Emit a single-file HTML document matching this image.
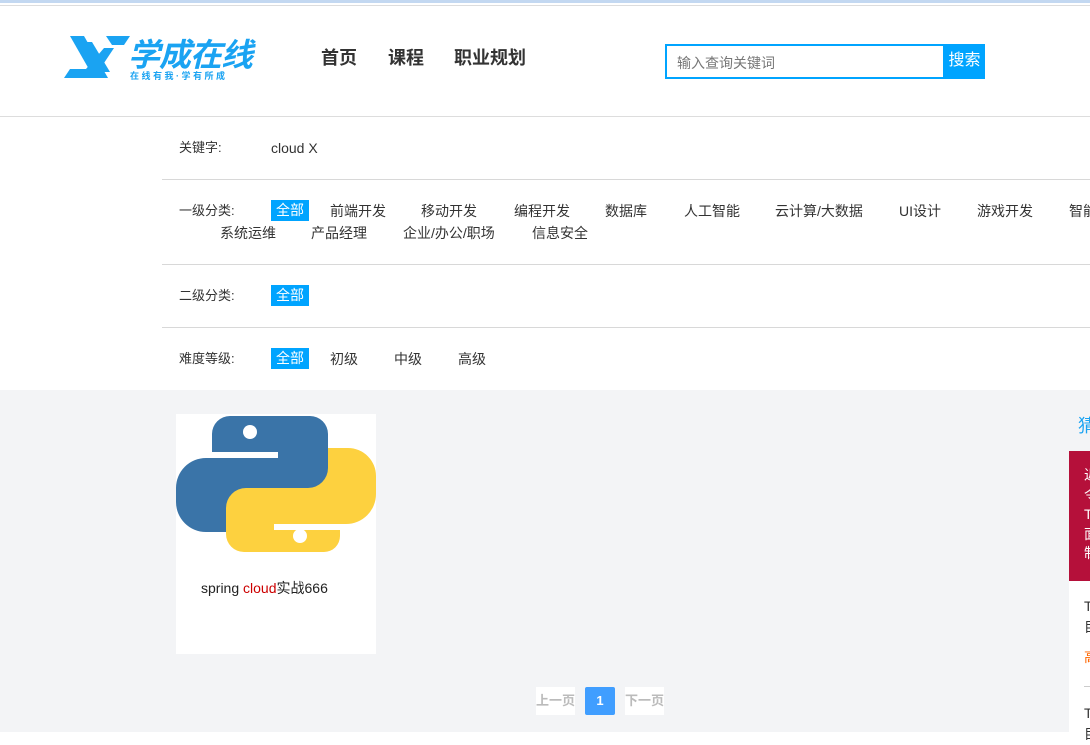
<!DOCTYPE html>
<html><head><meta charset="utf-8"><style>
*{margin:0;padding:0;box-sizing:border-box}
body{width:1090px;height:732px;overflow:hidden;background:#fff;font-family:"Liberation Sans","Noto Sans CJK SC",sans-serif;position:relative;color:#333}
.a{position:absolute;white-space:nowrap}
.f{font-size:14px;color:#333;line-height:16px}
.sel{background:#00a4ff;color:#fff;padding:0 5px;line-height:21px;height:21px}
.line{position:absolute;left:162px;right:0;height:1px;background:#d8d8d8}
</style></head><body>
<div class="a" style="left:0;top:0;width:1090px;height:3px;background:#c3d8f1"></div>
<div class="a" style="left:0;top:5px;width:1090px;height:1px;background:#ddd"></div>
<svg class="a" style="left:64px;top:36px" width="66" height="42" viewBox="0 0 66 42">
<polygon points="6,0 20,0 44,42 30,42" fill="#1aa3f2"/>
<polygon points="22,6 28,6 46,36 40,36" fill="#1aa3f2"/>
<polygon points="42,0 66,0 60,9 48,9" fill="#1aa3f2"/>
<polygon points="40,12 50,12 30,42 0,42 6,33 22,33" fill="#1aa3f2"/>
</svg>
<div class="a" style="left:128px;top:30px;font-size:32px;font-weight:bold;font-style:italic;color:#1aa3f2;letter-spacing:-1px">学成在线</div>
<div class="a" style="left:130px;top:69px;font-size:9px;color:#1aa3f2;letter-spacing:2.5px;font-weight:bold">在线有我·学有所成</div>
<div class="a" style="left:321px;top:44px;font-size:18px;font-weight:bold;color:#333">首页</div>
<div class="a" style="left:388px;top:44px;font-size:18px;font-weight:bold;color:#333">课程</div>
<div class="a" style="left:454px;top:44px;font-size:18px;font-weight:bold;color:#333">职业规划</div>
<div class="a" style="left:665px;top:44px;width:280px;height:35px;border:2px solid #00a4ff;font-size:14px;color:#777;padding:7px 10px">输入查询关键词</div>
<div class="a" style="left:944px;top:44px;width:41px;height:35px;background:#00a4ff;color:#fff;font-size:16px;line-height:34px;text-align:center">搜索</div>
<div class="a" style="left:0;top:116px;width:1090px;height:1px;background:#ddd"></div>

<div class="a f" style="left:179px;top:140px;font-size:13px">关键字:</div>
<div class="a f" style="left:271px;top:140px">cloud X</div>
<div class="line" style="top:179px"></div>
<div class="a f" style="left:179px;top:203px;font-size:13px">一级分类:</div>
<div class="a f sel" style="left:271px;top:200px">全部</div>
<div class="a f" style="left:330px;top:203px">前端开发</div>
<div class="a f" style="left:421px;top:203px">移动开发</div>
<div class="a f" style="left:514px;top:203px">编程开发</div>
<div class="a f" style="left:605px;top:203px">数据库</div>
<div class="a f" style="left:684px;top:203px">人工智能</div>
<div class="a f" style="left:775px;top:203px">云计算/大数据</div>
<div class="a f" style="left:899px;top:203px">UI设计</div>
<div class="a f" style="left:977px;top:203px">游戏开发</div>
<div class="a f" style="left:1069px;top:203px">智能</div>
<div class="a f" style="left:220px;top:225px">系统运维</div>
<div class="a f" style="left:311px;top:225px">产品经理</div>
<div class="a f" style="left:403px;top:225px">企业/办公/职场</div>
<div class="a f" style="left:532px;top:225px">信息安全</div>
<div class="line" style="top:264px"></div>
<div class="a f" style="left:179px;top:288px;font-size:13px">二级分类:</div>
<div class="a f sel" style="left:271px;top:285px">全部</div>
<div class="line" style="top:327px"></div>
<div class="a f" style="left:179px;top:351px;font-size:13px">难度等级:</div>
<div class="a f sel" style="left:271px;top:348px">全部</div>
<div class="a f" style="left:330px;top:351px">初级</div>
<div class="a f" style="left:394px;top:351px">中级</div>
<div class="a f" style="left:458px;top:351px">高级</div>

<div class="a" style="left:0;top:390px;width:1090px;height:342px;background:#f3f4f6"></div>
<div class="a" style="left:176px;top:414px;width:200px;height:240px;background:#fff"></div>
<svg class="a" style="left:176px;top:414px" width="200" height="138" viewBox="0 0 200 138">
<path d="M54,2 h80 a18,18 0 0 1 18,18 v40 a18,18 0 0 1 -18,18 h-60 a20,20 0 0 0 -20,20 v20 h-24 a30,30 0 0 1 -30,-30 v-14 a30,30 0 0 1 30,-30 h72 v-6 h-66 v-18 a18,18 0 0 1 18,-18z" fill="#3a74a8"/>
<circle cx="74" cy="18" r="7" fill="#fff"/>
<path d="M152,34 h20 a28,28 0 0 1 28,28 v18 a30,30 0 0 1 -30,30 h-72 v6 h66 v6 a16,16 0 0 1 -16,16 h-80 a18,18 0 0 1 -18,-18 v-26 a20,20 0 0 1 20,-20 h62 a20,20 0 0 0 20,-20z" fill="#fdd13f"/>
<circle cx="124" cy="122" r="7" fill="#fff"/>
</svg>
<div class="a" style="left:201px;top:578px;font-size:14px;color:#222">spring <span style="color:#c00">cloud</span>实战666</div>

<div class="a" style="left:536px;top:687px;width:39px;height:28px;background:#fff;color:#bbb;font-size:13px;line-height:28px;text-align:center;font-weight:bold">上一页</div>
<div class="a" style="left:585px;top:687px;width:30px;height:28px;background:#409eff;color:#fff;font-size:13px;line-height:28px;text-align:center;font-weight:bold;border-radius:2px">1</div>
<div class="a" style="left:625px;top:687px;width:39px;height:28px;background:#fff;color:#bbb;font-size:13px;line-height:28px;text-align:center;font-weight:bold">下一页</div>

<div class="a" style="left:1078px;top:412px;font-size:18px;color:#1aa3f2">猜</div>
<div class="a" style="left:1069px;top:451px;width:21px;height:130px;background:#b5103a"></div>
<div class="a" style="left:1084px;top:466px;font-size:14px;color:#fff;line-height:19.5px">近<br>令<br>T<br>面<br>制</div>
<div class="a" style="left:1069px;top:581px;width:21px;height:151px;background:#fff"></div>
<div class="a" style="left:1084px;top:596px;font-size:14px;color:#333;line-height:21px">T<br>目</div>
<div class="a" style="left:1084px;top:647px;font-size:14px;color:#f60">高</div>
<div class="a" style="left:1084px;top:686px;width:6px;height:1px;background:#ccc"></div>
<div class="a" style="left:1084px;top:703px;font-size:14px;color:#333;line-height:21px">T<br>目</div>
<div class="a" style="left:1086px;top:54px;font-size:10px;color:#c96">⋮</div>
</body></html>
